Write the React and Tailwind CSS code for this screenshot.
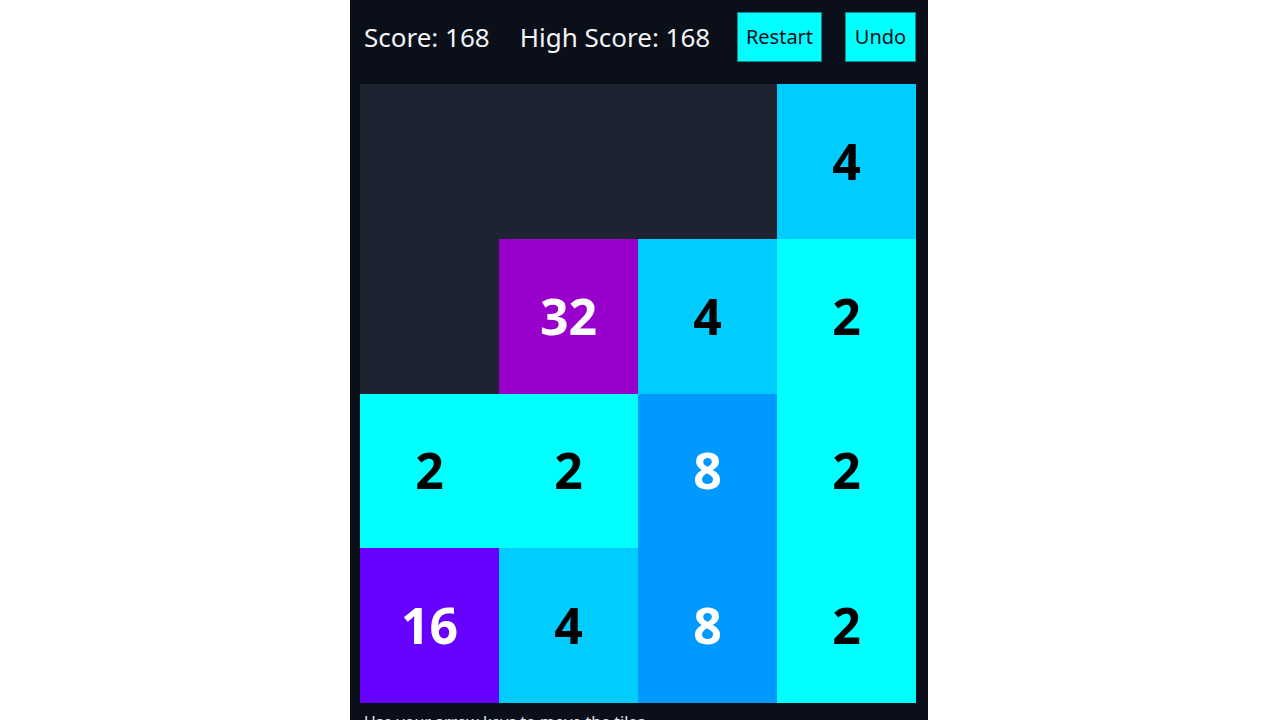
import React from "react";

const colors = {
  2: "bg-[#00ffff] text-black",
  4: "bg-[#00ccff] text-black",
  8: "bg-[#0099ff] text-white",
  16: "bg-[#6600ff] text-white",
  32: "bg-[#9900cc] text-white",
};

const grid = [
  [0, 0, 0, 4],
  [0, 32, 4, 2],
  [2, 2, 8, 2],
  [16, 4, 8, 2],
];

export default function App() {
  return (
    <div className="min-h-[720px] bg-white" style={{ fontFamily: '"Noto Sans", "Open Sans", sans-serif' }}>
      <div className="ml-[350px] w-[578px] h-[720px] overflow-hidden bg-[#0a0f1a]">
        <div className="flex items-center h-[75px] pl-[14px] pr-[12px] text-[#f3f4f6]">
          <span className="text-[26px]">Score: 168</span>
          <span className="text-[26px] ml-[30px]">High Score: 168</span>
          <div className="ml-auto flex items-center gap-[23px] -mt-[2px]">
            <button className="w-[85px] h-[50px] bg-[#00ffff] border border-[#0b8a8a] text-[#0a0f1a] text-[20px]">Restart</button>
            <button className="w-[71px] h-[50px] bg-[#00ffff] border border-[#0b8a8a] text-[#0a0f1a] text-[20px]">Undo</button>
          </div>
        </div>
        <div className="mt-[9px] ml-[10px] w-[556px] h-[619px] bg-[#1e2332] grid grid-cols-4 grid-rows-4">
          {grid.flat().map((v, i) =>
            v ? (
              <div key={i} className={`flex items-center justify-center font-bold text-[50px] ${colors[v]}`}>
                {v}
              </div>
            ) : (
              <div key={i} />
            )
          )}
        </div>
        <div className="mt-[9px] pl-[14px] text-[#e5e7eb] text-[16px] leading-[20px]">
          Use your arrow keys to move the tiles.
        </div>
      </div>
    </div>
  );
}
